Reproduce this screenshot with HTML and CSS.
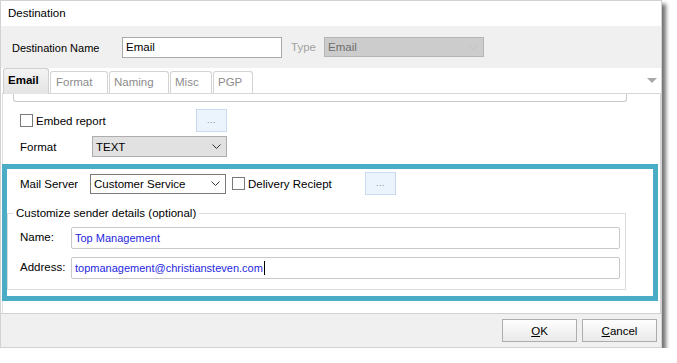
FILE: index.html
```html
<!DOCTYPE html>
<html>
<head>
<meta charset="utf-8">
<link rel="stylesheet" href="styles.css">
</head>
<body>
<div class="dialog">
  <div class="titlebar">Destination</div>
  <div class="header">
    <span class="hlabel">Destination Name</span>
    <div class="textbox name-box">Email</div>
    <span class="type-label">Type</span>
    <div class="select select-disabled">
      <span>Email</span>
      <svg class="chev" width="9" height="5" viewBox="0 0 9 5"><polyline points="0.5,0.5 4.5,4.5 8.5,0.5" fill="none" stroke="#c4c4c4" stroke-width="1"/></svg>
    </div>
  </div>
  <div class="tabs">
    <div class="tab active">Email</div>
    <div class="tab w-format">Format</div>
    <div class="tab w-naming">Naming</div>
    <div class="tab w-misc">Misc</div>
    <div class="tab w-pgp">PGP</div>
    <div class="tab-arrow"></div>
  </div>
  <div class="panel">
    <div class="clipbox"></div>
    <div class="row embed-row">
      <span class="check"></span>
      <span class="clabel embed-label">Embed report</span>
      <div class="dots-btn"><span>...</span></div>
    </div>
    <div class="row format-row">
      <span class="flabel">Format</span>
      <div class="select select-format">
        <span>TEXT</span>
        <svg class="chev" width="9" height="5" viewBox="0 0 9 5"><polyline points="0.5,0.5 4.5,4.5 8.5,0.5" fill="none" stroke="#333" stroke-width="1"/></svg>
      </div>
    </div>
    <div class="highlight">
      <div class="row mail-row">
        <span class="mlabel">Mail Server</span>
        <div class="select select-mail">
          <span>Customer Service</span>
          <svg class="chev" width="9" height="5" viewBox="0 0 9 5"><polyline points="0.5,0.5 4.5,4.5 8.5,0.5" fill="none" stroke="#333" stroke-width="1"/></svg>
        </div>
        <span class="check check-delivery"></span>
        <span class="clabel delivery-label">Delivery Reciept</span>
        <div class="dots-btn"><span>...</span></div>
      </div>
      <fieldset class="group">
        <legend>Customize sender details (optional)</legend>
        <div class="grid">
          <span class="glabel">Name:</span>
          <div class="textbox blue">Top Management</div>
          <span class="glabel">Address:</span>
          <div class="textbox blue">topmanagement@christiansteven.com<span class="caret"></span></div>
        </div>
      </fieldset>
    </div>
  </div>
  <div class="footer">
    <div class="btn"><u>O</u>K</div>
    <div class="btn"><u>C</u>ancel</div>
  </div>
</div>
</body>
</html>
```
FILE: styles.css
```css
html, body {
  margin: 0;
  padding: 0;
  background: #ffffff;
}
body {
  font-family: "Segoe UI", "Liberation Sans", Arial, sans-serif;
  font-size: 11.5px;
  color: #000;
}
.dialog {
  width: 660px;
  height: 346px;
  border: 1px solid #d2d2d2;
  background: #fff;
  display: flex;
  flex-direction: column;
  box-shadow: 4px 4px 4px rgba(0, 0, 0, 0.55);
}
.titlebar {
  height: 25px;
  line-height: 24px;
  padding-left: 7px;
  font-size: 11.5px;
  background: #fff;
  flex: none;
}
.header {
  height: 42px;
  flex: none;
  background: #f0f0f0;
  display: flex;
  align-items: center;
  padding-left: 11px;
}
.hlabel {
  width: 110px;
  margin-top: 1px;
  font-size: 11px;
}
.textbox {
  box-sizing: border-box;
  height: 22px;
  border: 1px solid #c8c8c8;
  border-radius: 2px;
  background: #fff;
  padding-left: 3px;
  line-height: 19px;
  display: flex;
  align-items: center;
}
.name-box {
  width: 160px;
  height: 21px;
  border-color: #a9a9a9;
  border-radius: 0;
}
.type-label {
  color: #a3a3a3;
  margin-left: 9px;
  width: 33px;
}
.select {
  box-sizing: border-box;
  height: 20px;
  border: 1px solid #adadad;
  display: flex;
  align-items: center;
  justify-content: space-between;
  padding: 0 5px 0 3px;
}
.select-disabled {
  width: 160px;
  background: #cccccc;
  color: #6d6d6d;
  border-color: #b4b4b4;
}
.tabs {
  height: 25px;
  flex: none;
  display: flex;
  align-items: flex-end;
  padding-left: 2px;
  position: relative;
  z-index: 1;
}
.tab {
  box-sizing: border-box;
  height: 22px;
  border: 1px solid #d3d3d3;
  border-bottom: none;
  border-radius: 3px 3px 0 0;
  background: #fff;
  color: #8c8c8c;
  padding: 4px 0 0 4px;
  margin-left: 1px;
}
.tab.active {
  width: 46px;
  height: 26px;
  margin-left: 0;
  margin-bottom: -1px;
  font-weight: bold;
  color: #000;
  padding-top: 5px;
  background: linear-gradient(to bottom, #f3f3f3 0%, #e4e4e4 100%);
  border-color: #cfcfcf;
}
.w-format { width: 58px; padding-left: 5px; }
.w-naming { width: 60px; }
.w-misc { width: 42px; }
.w-pgp { width: 40px; }
.tab-arrow {
  margin-left: auto;
  margin-right: 4px;
  align-self: center;
  width: 0;
  height: 0;
  border-left: 5px solid transparent;
  border-right: 5px solid transparent;
  border-top: 5px solid #a8a8a8;
}
.panel {
  box-sizing: border-box;
  height: 220px;
  flex: none;
  margin-left: 1px;
  border-top: 1px solid #d6d6d6;
  border-left: 1px solid #e2e2e2;
  border-right: 1px solid #d6d6d6;
  background: #fff;
  display: flex;
  flex-direction: column;
}
.clipbox {
  box-sizing: border-box;
  margin-left: 10px;
  width: 614px;
  height: 8px;
  border: 1px solid #c9c9c9;
  border-top: none;
  border-radius: 0 0 3px 3px;
  flex: none;
}
.row {
  display: flex;
  align-items: center;
  flex: none;
}
.embed-row {
  margin-top: 7px;
  height: 23px;
  padding-left: 17px;
}
.check {
  box-sizing: border-box;
  width: 13px;
  height: 13px;
  border: 1px solid #7a7a7a;
  background: #fff;
  flex: none;
}
.clabel {
  margin-left: 3px;
}
.embed-label {
  width: 160px;
}
.dots-btn {
  box-sizing: border-box;
  width: 31px;
  height: 23px;
  border: 1px solid #c9dbee;
  background: #ebf3fc;
  display: flex;
  justify-content: center;
  align-items: flex-end;
  color: #8a8a8a;
  font-size: 9px;
  line-height: 9px;
  padding-bottom: 6px;
  letter-spacing: 0.5px;
}
.format-row {
  margin-top: 4px;
  height: 21px;
  padding-left: 17px;
}
.flabel {
  width: 72px;
}
.select-format {
  width: 135px;
  height: 21px;
  background: #e1e1e1;
  border-color: #adadad;
}
.highlight {
  margin-top: 7px;
  margin-left: -1px;
  width: 646px;
  border: 5px solid #4bacc6;
  flex: none;
  background: #fff;
}
.mail-row {
  margin-top: 3px;
  height: 23px;
  padding-left: 13px;
}
.mlabel {
  width: 70px;
}
.select-mail {
  width: 136px;
  height: 20px;
  background: #fff;
  border-color: #7a7a7a;
}
.check-delivery {
  margin-left: 6px;
}
.delivery-label {
  width: 117px;
}
.group {
  margin: 10px 0 6px 0;
  padding: 0 0 10px 0;
  width: 619px;
  box-sizing: border-box;
  border: 1px solid #dcdcdc;
  min-width: 0;
}
.group legend {
  margin-left: 5px;
  padding: 0 3px;
  line-height: 16px;
  font-size: 11.5px;
}
.grid {
  display: grid;
  grid-template-columns: 51px 549px;
  row-gap: 8px;
  margin-top: 6px;
  padding-left: 12px;
  align-items: center;
}
.glabel {
  margin-top: -3px;
}
.blue {
  color: #1f1fe0;
  font-size: 11px;
  padding-left: 3px;
}
.caret {
  display: inline-block;
  width: 1px;
  height: 14px;
  background: #000;
  margin-left: 1px;
}
.footer {
  box-sizing: border-box;
  height: 34px;
  flex: none;
  background: #f0f0f0;
  border-top: 1px solid #d2d2d2;
  display: flex;
  justify-content: flex-end;
  align-items: flex-start;
  padding: 5px 4px 0 0;
  gap: 5px;
}
.btn {
  box-sizing: border-box;
  width: 75px;
  height: 23px;
  border: 1px solid #adadad;
  background: linear-gradient(to bottom, #ffffff 0%, #f3f3f3 50%, #e9e9e9 100%);
  display: flex;
  align-items: center;
  justify-content: center;
}
.chev {
  flex: none;
}
```
